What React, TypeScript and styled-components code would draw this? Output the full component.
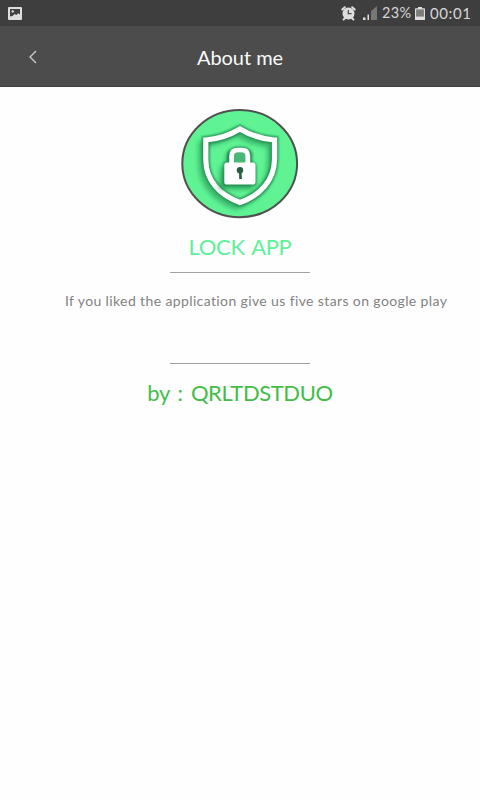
import React from "react";
import styled, { createGlobalStyle } from "styled-components";

const GlobalStyle = createGlobalStyle`
  * { box-sizing: border-box; }
  body { margin: 0; background: #fff; font-family: Lato, "Open Sans", sans-serif; }
`;

const Screen = styled.main`
  width: 480px;
  height: 800px;
  overflow: hidden;
  background: #fefefe;
`;

const StatusBar = styled.div`
  display: flex;
  align-items: center;
  justify-content: space-between;
  height: 26px;
  padding: 0 9px 0 8px;
  background: #3e3e3e;
  color: #d6d6d6;
`;

const StatusGroup = styled.div`
  display: flex;
  align-items: center;
  height: 26px;
`;

const StatusIcon = styled.svg<{ $gap?: number }>`
  display: block;
  flex: none;
  margin-right: ${(p) => p.$gap ?? 0}px;
`;

const Label = styled.span<{ $size: number; $spacing?: number; $gap?: number; $width?: number }>`
  display: block;
  white-space: pre;
  width: ${(p) => (p.$width ? `${p.$width}px` : "auto")};
  font-size: ${(p) => p.$size}px;
  line-height: 26px;
  letter-spacing: ${(p) => p.$spacing ?? 0}px;
  margin-right: ${(p) => p.$gap ?? 0}px;
`;

const Header = styled.header`
  display: grid;
  grid-template-columns: 64px 1fr 64px;
  align-items: center;
  height: 61px;
  background: #4c4c4c;
  border-bottom: 1px solid #424242;
`;

const BackButton = styled.button`
  display: flex;
  align-items: center;
  justify-content: center;
  height: 60px;
  padding: 2px 0 0 1px;
  border: 0;
  background: none;
`;

const Title = styled.h1`
  margin: 0;
  padding-top: 1px;
  text-align: center;
  white-space: nowrap;
  color: #fafafa;
  font-size: 20px;
  font-weight: 400;
  line-height: 28px;
  letter-spacing: -0.05px;
`;

const Content = styled.section`
  display: flex;
  flex-direction: column;
  align-items: center;
  padding-top: 21px;
`;

const Logo = styled.svg`
  display: block;
  width: 120px;
  height: 112px;
`;

const AppName = styled.h2`
  margin: 11px 0 0;
  height: 32px;
  white-space: nowrap;
  color: #5ff09b;
  font-size: 22px;
  font-weight: 400;
  line-height: 32px;
  letter-spacing: -0.35px;
  word-spacing: 2px;
`;

const Divider = styled.hr<{ $top: number }>`
  width: 140px;
  height: 1px;
  margin: ${(p) => p.$top}px 0 0;
  border: 0;
  background: #a2a2a2;
`;

const Message = styled.p`
  align-self: flex-start;
  height: 20px;
  margin: 18px 0 0 65px;
  white-space: nowrap;
  color: #828282;
  font-size: 14px;
  line-height: 20px;
  letter-spacing: 0.38px;
`;

const Author = styled.p`
  height: 32px;
  margin: 13px 0 0;
  white-space: nowrap;
  color: #43bd47;
  font-size: 22px;
  line-height: 32px;
  letter-spacing: -0.4px;
  word-spacing: 3px;
`;

const SHIELD = "M60 21 C50 27 38 31 25.8 32 V52 C26 72 39 87 60 94.5 C81 87 94 72 94.5 52 V32 C82 31 70 27 60 21 Z";

function ShieldLogo() {
  return (
    <Logo viewBox="0 0 120 112" role="img" aria-label="Lock app">
      <defs>
        <filter id="soft" x="-30%" y="-30%" width="160%" height="160%">
          <feGaussianBlur stdDeviation="2.6" />
        </filter>
        <filter id="tight" x="-30%" y="-30%" width="160%" height="160%">
          <feGaussianBlur stdDeviation="0.9" />
        </filter>
      </defs>
      <ellipse cx="59.7" cy="55.6" rx="57.4" ry="53.6" fill="#60f394" stroke="#50504f" strokeWidth="2" />
      <g fill="none" stroke="#187a44" strokeWidth="6">
        <path d={SHIELD} transform="translate(-4 4)" opacity="0.55" filter="url(#soft)" />
        <path d={SHIELD} strokeWidth="8" opacity="0.75" filter="url(#tight)" />
      </g>
      <path d={SHIELD} fill="none" stroke="#fff" strokeWidth="5.2" />
      <g fill="#187a44">
        <path d="M43 56 H48 V48 Q50 39 60 40 Q71 40 71 49 V55 L75 58 V79 H41 Z" opacity="0.65" transform="translate(-2 2)" filter="url(#soft)" />
        <path d="M43.5 54 H47 V46 Q49 38.5 60 38.5 Q71 38.5 72.5 46 V54 Q76.5 54 76.5 59 V77.5 H43.5 Z" opacity="0.75" filter="url(#tight)" />
      </g>
      <rect x="54" y="45" width="12" height="10" fill="#48b974" />
      <path d="M51.6 57 V48 Q51.6 42.2 57.5 42.2 H62 Q67.8 42.2 67.8 48 V57" fill="none" stroke="#fff" strokeWidth="4.8" />
      <rect x="44.3" y="54.5" width="31.2" height="22" rx="2.6" fill="#fff" />
      <circle cx="60" cy="62.3" r="3.2" fill="#28603f" />
      <path d="M59 62 H61.3 L62 71 H59.2 Z" fill="#28603f" />
    </Logo>
  );
}

function PictureIcon() {
  return (
    <StatusIcon width="14" height="13" viewBox="0 0 14 13">
      <rect width="14" height="13" rx="1" fill="#dedede" />
      <path d="M2 2 H12 V7.5 L10 6.3 L8.5 8 L6.5 7 L4.5 9 L2 9.5 Z" fill="#414141" />
      <circle cx="4.7" cy="4.4" r="1.2" fill="#dedede" />
    </StatusIcon>
  );
}

function AlarmIcon() {
  return (
    <StatusIcon width="15" height="15" viewBox="0 0 15 15" $gap={7}>
      <path d="M1.3 3.5 L3.8 1.2 M13.7 3.5 L11.2 1.2 M4 12 L2.6 13.5 M11 12 L12.4 13.5" stroke="#dedede" strokeWidth="2" strokeLinecap="round" />
      <circle cx="7.5" cy="7.4" r="6" fill="#dedede" />
      <path d="M7.3 3.9 V7.7 H10.5" fill="none" stroke="#484848" strokeWidth="1.2" />
    </StatusIcon>
  );
}

function SignalIcon() {
  return (
    <StatusIcon width="14" height="14" viewBox="0 0 14 14" $gap={5}>
      <path d="M0 11.5 H2.5 V14 H0 Z M4.5 8.5 H6 V14 H4.5 Z" fill="#dedede" />
      <path d="M8 5 L10 3.5 V14 H8 Z M10 3.5 L14 0 V14 H10 Z" fill="#777" />
    </StatusIcon>
  );
}

function BatteryIcon() {
  return (
    <StatusIcon width="10" height="13" viewBox="0 0 10 13" $gap={5}>
      <path d="M3 0 H7 V1.3 H9.2 Q10 1.3 10 2 V13 H0 V2 Q0 1.3 .8 1.3 H3 Z" fill="#dedede" />
      <rect x="1.1" y="2.4" width="7.8" height="7.2" fill="#7b7b7b" />
    </StatusIcon>
  );
}

export default function App() {
  return (
    <>
      <GlobalStyle />
      <Screen>
        <StatusBar>
          <PictureIcon />
          <StatusGroup>
            <AlarmIcon />
            <SignalIcon />
            <Label $size={14.5} $spacing={0.3} $width={30} $gap={3}>23%</Label>
            <BatteryIcon />
            <Label $size={15} $spacing={0.6} $width={41}>00:01</Label>
          </StatusGroup>
        </StatusBar>
        <Header>
          <BackButton aria-label="Back">
            <svg width="10" height="14" viewBox="0 0 10 14">
              <path d="M8 1 L2 7 L8 13" fill="none" stroke="#d2d2d2" strokeWidth="1.2" />
            </svg>
          </BackButton>
          <Title>About me</Title>
        </Header>
        <Content>
          <ShieldLogo />
          <AppName>LOCK APP</AppName>
          <Divider $top={9} />
          <Message>If you liked the application give us five stars on google play</Message>
          <Divider $top={52} />
          <Author>by : QRLTDSTDUO</Author>
        </Content>
      </Screen>
    </>
  );
}
